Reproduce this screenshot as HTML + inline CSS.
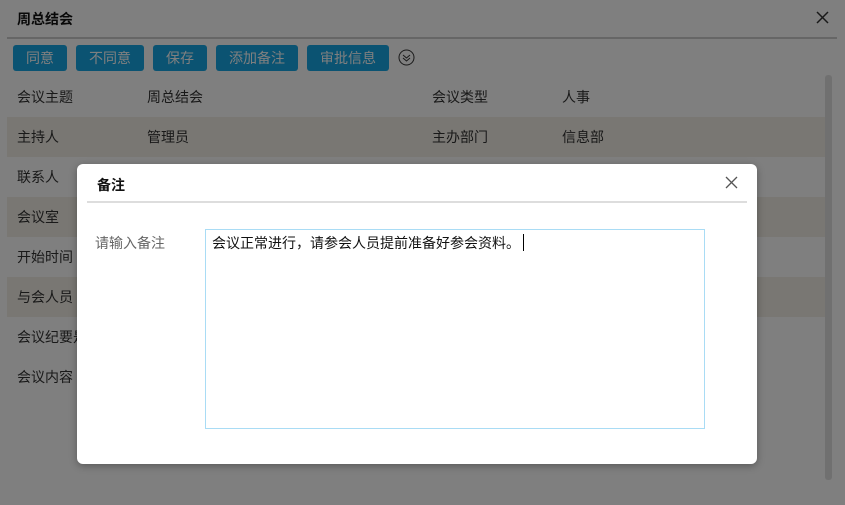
<!DOCTYPE html>
<html><head><meta charset="utf-8"><style>
*{margin:0;padding:0;box-sizing:border-box}
body{width:845px;height:505px;overflow:hidden;background:#fff;font-family:"Liberation Sans","Noto Sans CJK SC",sans-serif;font-size:14px;color:#333;position:relative}
.t{position:absolute;left:17px;top:9px;font-weight:bold;font-size:14px;color:#111}
.hl{position:absolute;left:7px;top:37px;width:830px;height:2px;background:#ccc}
.btn{position:absolute;top:45px;height:26px;background:#16a6e4;color:#fff;border-radius:3px;font-size:14px;line-height:26px;text-align:center}
.row{position:absolute;left:7px;width:818px;height:40px;line-height:40px}
.row.a{background:#f2eee6}
.row span{position:absolute}
.sb{position:absolute;left:825px;top:75px;width:7px;height:405px;background:#e0e0e0;border-radius:3px}
.ov{position:absolute;left:0;top:0;width:845px;height:505px;background:rgba(0,0,0,0.5)}
.dlg{position:absolute;left:77px;top:164px;width:680px;height:300px;background:#fff;border-radius:6px;box-shadow:0 2px 8px rgba(0,0,0,.3)}
.dt{position:absolute;left:20px;top:11px;font-weight:bold;color:#111}
.dl{position:absolute;left:10px;top:37px;width:660px;height:2px;background:#ddd}
.lb{position:absolute;left:18px;top:69px;color:#666}
.ta{position:absolute;left:128px;top:65px;width:500px;height:200px;border:1px solid #a9dcf5;padding:3px 6px;font-size:14px;color:#111}
.cur{display:inline-block;width:1px;height:17px;background:#000;vertical-align:-3px;margin-left:3px}
</style></head><body>
<div class="t">周总结会</div>
<svg style="position:absolute;left:816px;top:11px" width="13" height="13"><path d="M1 1L12 12M12 1L1 12" stroke="#333" stroke-width="1.5"/></svg>
<div class="hl"></div>
<div class="btn" style="left:13px;width:54px">同意</div>
<div class="btn" style="left:76px;width:68px">不同意</div>
<div class="btn" style="left:153px;width:54px">保存</div>
<div class="btn" style="left:216px;width:82px">添加备注</div>
<div class="btn" style="left:307px;width:82px">审批信息</div>
<svg style="position:absolute;left:398px;top:49px" width="17" height="17" viewBox="0 0 17 17"><circle cx="8.5" cy="8.5" r="7.5" fill="none" stroke="#333"/><path d="M5 6l3.5 3 3.5-3M5 9l3.5 3 3.5-3" fill="none" stroke="#333"/></svg>
<div class="row" style="top:77px"><span style="left:10px">会议主题</span><span style="left:140px">周总结会</span><span style="left:425px">会议类型</span><span style="left:555px">人事</span></div>
<div class="row a" style="top:117px"><span style="left:10px">主持人</span><span style="left:140px">管理员</span><span style="left:425px">主办部门</span><span style="left:555px">信息部</span></div>
<div class="row" style="top:157px"><span style="left:10px">联系人</span></div>
<div class="row a" style="top:197px"><span style="left:10px">会议室</span></div>
<div class="row" style="top:237px"><span style="left:10px">开始时间</span></div>
<div class="row a" style="top:277px"><span style="left:10px">与会人员</span></div>
<div class="row" style="top:317px"><span style="left:10px">会议纪要是否</span></div>
<div class="row" style="top:357px"><span style="left:10px">会议内容</span></div>
<div class="sb"></div>
<div class="ov"></div>
<div class="dlg">
<div class="dt">备注</div>
<svg style="position:absolute;left:648px;top:12px" width="13" height="13"><path d="M1 1L12 12M12 1L1 12" stroke="#555" stroke-width="1.3"/></svg>
<div class="dl"></div>
<div class="lb">请输入备注</div>
<div class="ta">会议正常进行，请参会人员提前准备好参会资料。<span class="cur"></span></div>
</div>
</body></html>
